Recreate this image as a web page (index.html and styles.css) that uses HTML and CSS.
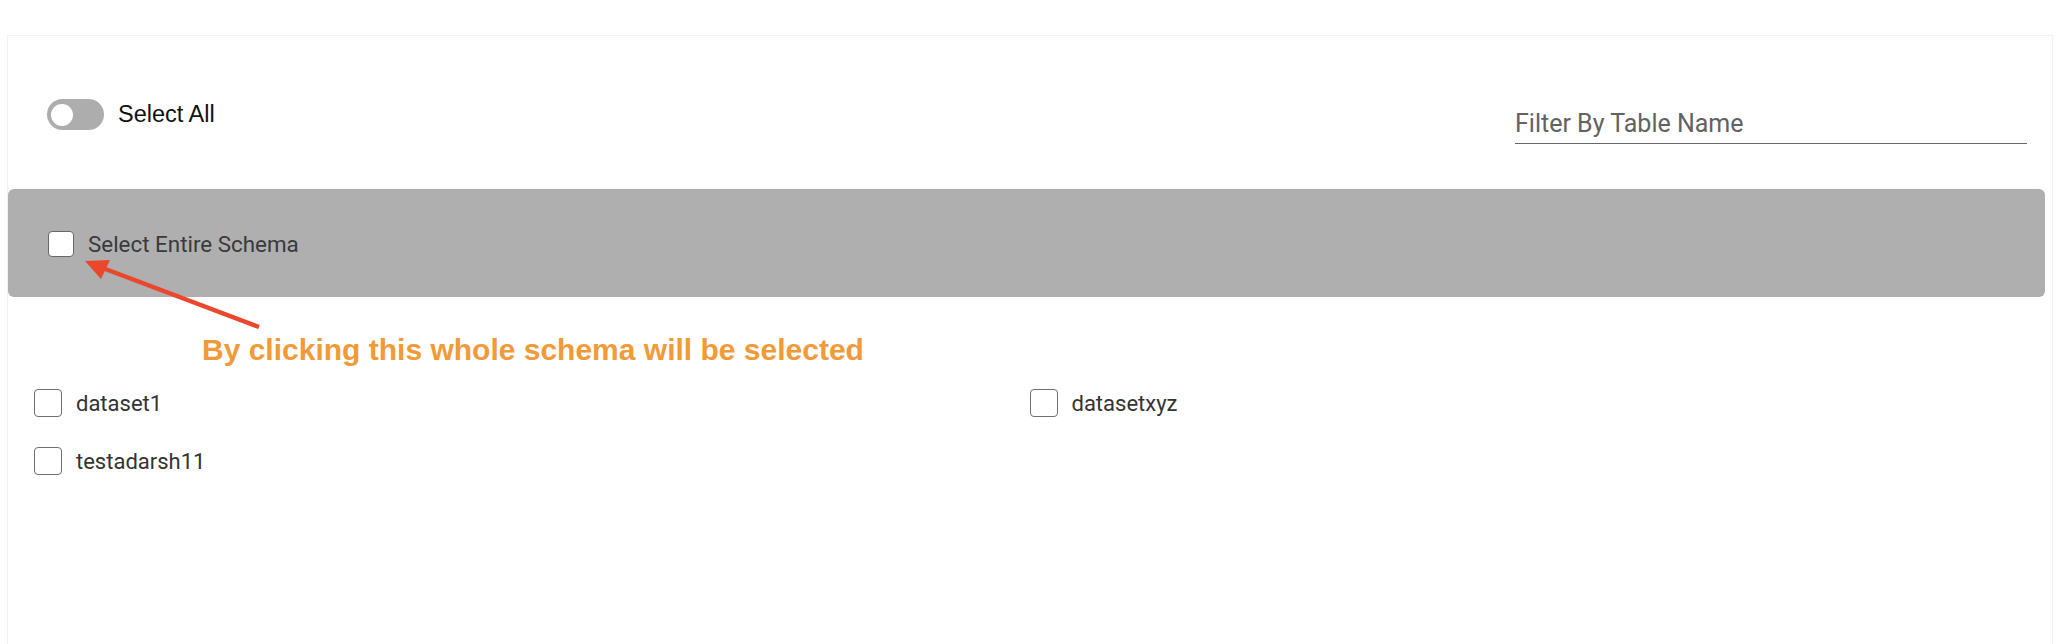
FILE: index.html
```html
<!DOCTYPE html>
<html lang="en">
<head>
<meta charset="utf-8">
<title>Schema selection</title>
<link rel="stylesheet" href="styles.css">
</head>
<body>
<div class="page">
  <div class="card">
    <div class="header">
      <label class="toggle-row">
        <span class="toggle"><span class="knob"></span></span>
        <span class="toggle-label">Select All</span>
      </label>
      <div class="filter">Filter By Table Name</div>
    </div>
    <div class="schema-panel">
      <span class="check check-schema"></span>
      <span class="schema-label">Select Entire Schema</span>
    </div>
    <div class="table-list">
      <div class="item"><span class="check"></span><span class="item-label">dataset1</span></div>
      <div class="item"><span class="check"></span><span class="item-label">datasetxyz</span></div>
      <div class="item"><span class="check"></span><span class="item-label">testadarsh11</span></div>
    </div>
  </div>
  <svg class="arrow" width="300" height="340" viewBox="0 0 300 340" xmlns="http://www.w3.org/2000/svg">
    <line x1="259" y1="327" x2="100" y2="267" stroke="#ea472d" stroke-width="4.5" stroke-linecap="butt"/>
    <polygon points="85,261 110,260 101,279" fill="#ea472d"/>
  </svg>
  <div class="note">By clicking this whole schema will be selected</div>
</div>
</body>
</html>
```

FILE: styles.css
```css
* { box-sizing: border-box; }
html, body { margin: 0; padding: 0; background: #ffffff; }
body { font-family: Roboto, "Noto Sans", sans-serif; }

.page {
  position: relative;
  width: 2072px;
  height: 644px;
  padding-top: 35px;
  overflow: hidden;
}

.card {
  margin-left: 7px;
  width: 2046px;
  height: 620px;
  border: 1px solid #f2f2f2;
  border-bottom: none;
}

.header {
  display: flex;
  justify-content: space-between;
  align-items: flex-start;
  padding: 63px 25px 0 39px;
}

.toggle-row {
  display: flex;
  align-items: center;
  gap: 14px;
  height: 31px;
}

.toggle {
  display: flex;
  align-items: center;
  width: 57px;
  height: 31px;
  border-radius: 16px;
  background: #adadad;
  padding-left: 4px;
}

.knob {
  width: 22px;
  height: 22px;
  border-radius: 50%;
  background: #ffffff;
}

.toggle-label {
  font-family: "Liberation Sans", Arial, sans-serif;
  font-size: 23.5px;
  color: #111111;
}

.filter {
  width: 512px;
  margin-top: 10px;
  padding-bottom: 4px;
  font-size: 25px;
  line-height: 30px;
  color: #626262;
  border-bottom: 1px solid #666666;
}

.schema-panel {
  display: flex;
  align-items: center;
  gap: 14px;
  margin: 45px 7px 0 0;
  height: 108px;
  padding: 2px 0 0 40px;
  background: #afafaf;
  border-radius: 6px;
}

.check {
  flex: none;
  width: 28px;
  height: 28px;
  border: 1px solid #707070;
  border-radius: 4px;
  background: #ffffff;
}

.check-schema {
  width: 26px;
  height: 26px;
  border-color: #666666;
}

.schema-label {
  font-size: 22.4px;
  color: #3a3a3a;
}

.table-list {
  display: grid;
  grid-template-columns: 1fr 1fr;
  row-gap: 30px;
  padding: 0 27px 0 26px;
  margin-top: 92px;
}

.item {
  display: flex;
  align-items: center;
  gap: 14px;
  height: 28px;
}

.item-label {
  font-size: 22px;
  color: #333333;
}

.arrow {
  position: absolute;
  left: 0;
  top: 0;
}

.note {
  position: absolute;
  left: 202px;
  top: 332px;
  font-family: "Liberation Sans", Arial, sans-serif;
  font-weight: bold;
  font-size: 30px;
  line-height: 36px;
  color: #f29a38;
  white-space: nowrap;
}
```
